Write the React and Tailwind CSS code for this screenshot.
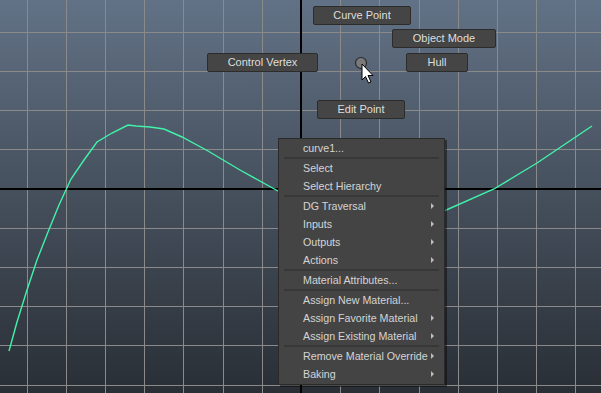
import React from "react";

const font = { fontFamily: '"Liberation Sans", Arial, sans-serif' };

function Grid() {
  const vs = [];
  for (let k = -8; k <= 8; k++) {
    const x = 301 + 39.2 * k;
    if (x > 0 && x < 601 && k !== 0) vs.push(Math.round(x) + 0.5);
  }
  const hs = [];
  for (let k = -6; k <= 6; k++) {
    const y = 188.6 + 39.2 * k;
    if (y > 0 && y < 393 && k !== 0) hs.push(Math.round(y) + 0.5);
  }
  const curve =
    "9,351 17,322 27,290 37,260 48,232 59,205 71,179 84,160 97,142 112,133 128,125 136,126 150,127 164,129 182,137 208,151 240,170 278,191 320,213 360,225 400,222 444,211 494,189 537,163 592,126";
  return (
    <svg className="absolute inset-0" width="601" height="393" viewBox="0 0 601 393">
      {vs.map((x) => (
        <line key={"v" + x} x1={x} y1="0" x2={x} y2="393" stroke="#8a8a8a" strokeWidth="1" />
      ))}
      {hs.map((y) => (
        <line key={"h" + y} x1="0" y1={y} x2="601" y2={y} stroke="#8a8a8a" strokeWidth="1" />
      ))}
      <rect x="300" y="0" width="2" height="393" fill="#000" />
      <rect x="0" y="188" width="601" height="2" fill="#000" />
      <polyline points={curve} fill="none" stroke="#40f2aa" strokeWidth="1.4" />
    </svg>
  );
}

function Btn({ label, className }) {
  return (
    <div
      className={
        "absolute h-[19px] flex items-center justify-center bg-[#454545] border border-[#2c2c2c] rounded-[2px] text-[11px] text-[#dedede] leading-none " +
        className
      }
      style={font}
    >
      {label}
    </div>
  );
}

function Row({ label, arrow }) {
  return (
    <div className="relative h-[18px] flex items-center pl-[24px] text-[10.7px] text-[#d4d4d4] whitespace-nowrap">
      {label}
      {arrow && (
        <span className="absolute right-[10px] top-[6px] w-0 h-0 border-y-[3px] border-y-transparent border-l-[3px] border-l-[#bdbdbd]" />
      )}
    </div>
  );
}

function Sep() {
  return <div className="h-[2px] mx-[5px] bg-[#383838]" />;
}

function Cursor() {
  return (
    <svg className="absolute left-[354px] top-[55px]" width="22" height="30" viewBox="0 0 22 30">
      <circle cx="7" cy="8" r="5.5" fill="#7a7a7a" stroke="#2a2a2a" strokeWidth="1.2" />
      <path
        d="M8 9 L8 25 L11.5 21.5 L14.5 28 L17 27 L14 20.5 L19 20.5 Z"
        fill="#fff"
        stroke="#000"
        strokeWidth="1"
        strokeLinejoin="miter"
      />
    </svg>
  );
}

export default function App() {
  return (
    <div
      className="relative w-[601px] h-[393px] overflow-hidden bg-linear-to-b from-[#627286] to-[#2a2f36]"
      style={font}
    >
      <Grid />

      <Btn label="Curve Point" className="left-[313px] top-[6px] w-[98px]" />
      <Btn label="Object Mode" className="left-[392px] top-[29px] w-[104px]" />
      <Btn label="Control Vertex" className="left-[207px] top-[53px] w-[111px]" />
      <Btn label="Hull" className="left-[406px] top-[53px] w-[62px]" />
      <Btn label="Edit Point" className="left-[317px] top-[100px] w-[88px]" />

      <Cursor />

      <div className="absolute left-[278px] top-[138px] w-[167px] flex flex-col bg-[#444444] border border-[#2a2a2a] pb-[1px] shadow-[2px_2px_0_rgba(0,0,0,0.45)]">
        <Row label="curve1..." />
        <Sep />
        <Row label="Select" />
        <Row label="Select Hierarchy" />
        <Sep />
        <Row label="DG Traversal" arrow />
        <Row label="Inputs" arrow />
        <Row label="Outputs" arrow />
        <Row label="Actions" arrow />
        <Sep />
        <Row label="Material Attributes..." />
        <Sep />
        <Row label="Assign New Material..." />
        <Row label="Assign Favorite Material" arrow />
        <Row label="Assign Existing Material" arrow />
        <Sep />
        <Row label="Remove Material Override" arrow />
        <Row label="Baking" arrow />
      </div>
    </div>
  );
}
